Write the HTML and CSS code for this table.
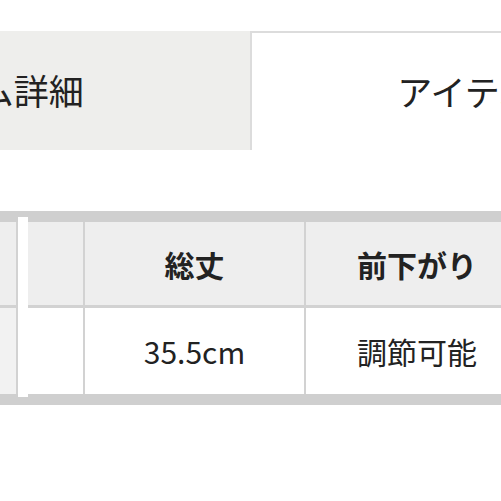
FILE: index.html
```html
<!DOCTYPE html>
<html lang="ja">
<head>
<meta charset="utf-8">
<link rel="stylesheet" href="styles.css">
</head>
<body>
<div class="page">
  <div class="tabs">
    <div class="tab tab-inactive">アイテム詳細</div>
    <div class="tab tab-active">アイテムサイズ</div>
  </div>
  <div class="size-table">
    <div class="cell head stub"></div>
    <div class="gap"></div>
    <div class="cell head"></div>
    <div class="cell head">総丈</div>
    <div class="cell head last">前下がり</div>
    <div class="cell stub-body"></div>
    <div class="cell body"></div>
    <div class="cell body">35.5cm</div>
    <div class="cell body last">調節可能</div>
  </div>
</div>
</body>
</html>
```

FILE: styles.css
```css
html, body {
  margin: 0;
  padding: 0;
  overflow: hidden;
  background: #ffffff;
}
.page {
  width: 501px;
  height: 501px;
  overflow: hidden;
  font-family: "Noto Sans CJK JP", "Noto Sans", sans-serif;
  color: #222222;
}
.tabs {
  display: flex;
  margin-top: 31px;
  margin-left: -289px;
  height: 119px;
}
.tab {
  flex: none;
  display: flex;
  align-items: center;
  justify-content: center;
  font-size: 35px;
  box-sizing: border-box;
  padding-bottom: 3px;
}
.tab-inactive {
  width: 539px;
  background: #eeeeec;
}
.tab-active {
  width: 533px;
  background: #ffffff;
  border-top: 2px solid #dcdcdc;
  border-left: 2px solid #dcdcdc;
}
.size-table {
  margin-top: 61px;
  width: 540px;
  display: grid;
  grid-template-columns: 18px 10px 57px 221px 222px;
  grid-template-rows: 86px 86px;
  border-top: 11px solid #cfcfcf;
  border-bottom: 11px solid #cfcfcf;
}
.cell {
  display: flex;
  align-items: center;
  justify-content: center;
  font-size: 30px;
  border-right: 2px solid #d2d2d2;
  box-sizing: border-box;
}
.cell.last {
  border-right: none;
}
.head {
  background: #eeeeee;
  font-weight: bold;
  border-bottom: 3px solid #d2d2d2;
}
.stub-body {
  background: #f2f2f2;
}
.body {
  background: #ffffff;
}
.gap {
  grid-row: 1 / span 2;
  grid-column: 2;
  background: #ffffff;
  margin-top: -5px;
  margin-bottom: -3px;
}
```
